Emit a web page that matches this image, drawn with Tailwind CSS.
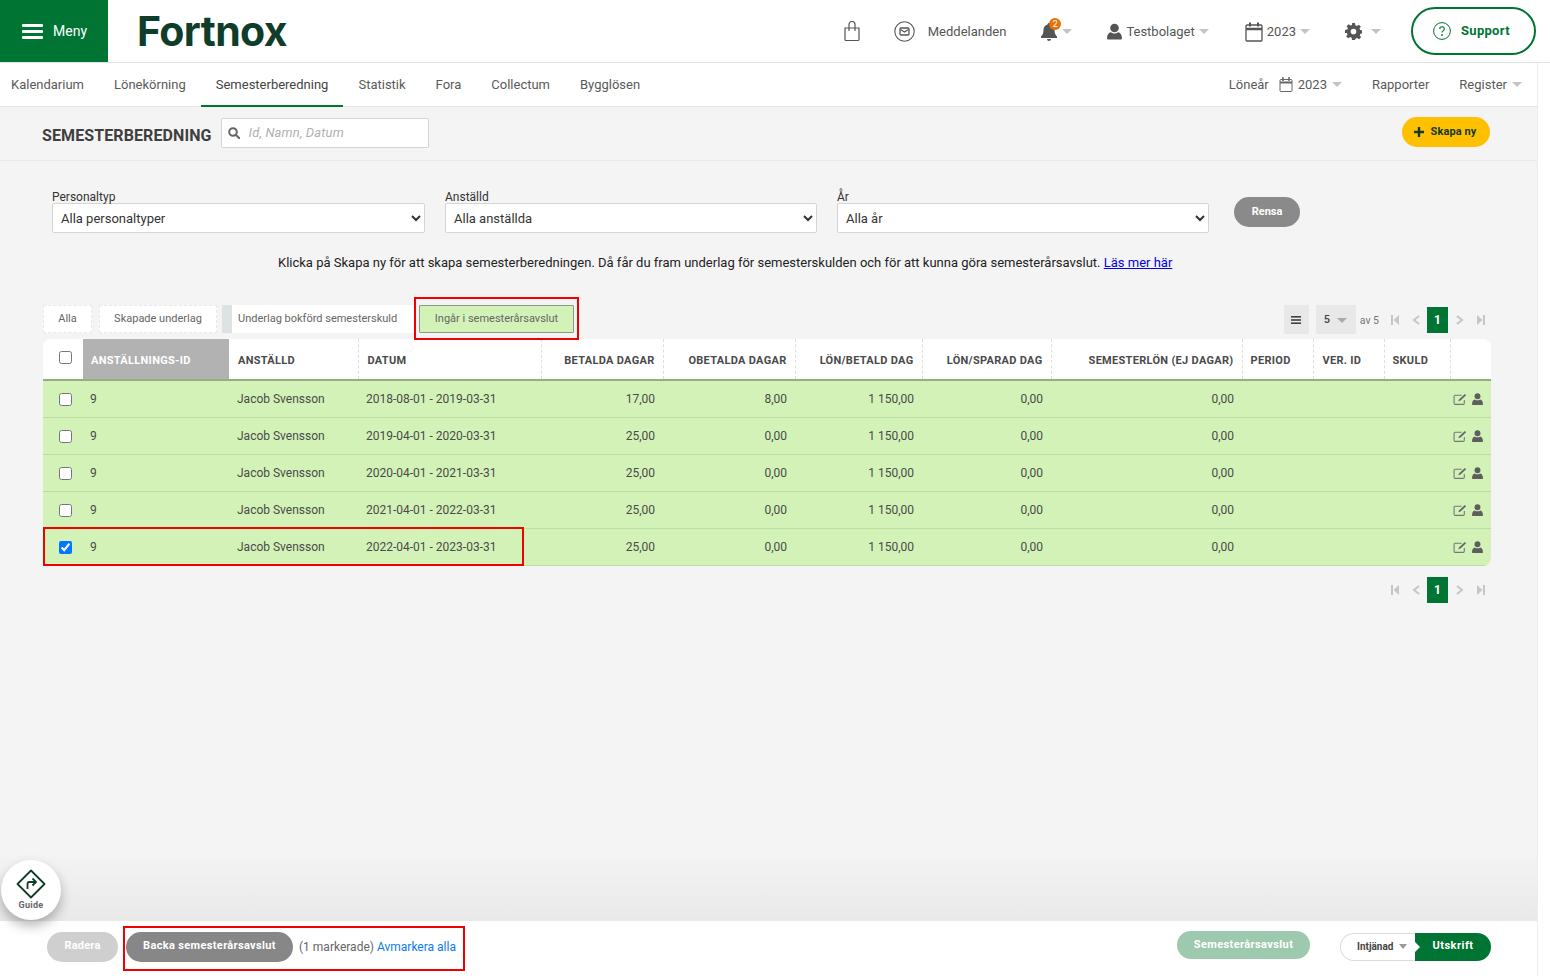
<!DOCTYPE html>
<html lang="sv">
<head>
<meta charset="utf-8">
<title>Semesterberedning</title>
<script src="https://cdn.jsdelivr.net/npm/@tailwindcss/browser@4"></script>
</head>
<body class="font-['Roboto',sans-serif] text-[#4a4a4a] bg-white overflow-hidden">
<div class="relative w-[1550px] h-[976px] flex flex-col overflow-hidden">

<!-- Top header -->
<header class="h-[63px] shrink-0 flex items-center bg-white border-b border-[#dde3e3]">
  <div class="w-[108px] h-[62px] bg-[#007533] flex items-center pl-[22px] gap-[10px] text-white text-[14px]">
    <svg width="21" height="17" viewBox="0 0 21 17" fill="#fff"><rect width="21" height="3" rx="1" y="1"/><rect width="21" height="3" rx="1" y="7"/><rect width="21" height="3" rx="1" y="13"/></svg>
    <span>Meny</span>
  </div>
  <div class="ml-[29px] w-[152px] text-[41px] leading-[40px] font-['Inter',sans-serif] font-bold text-[#0f3d2a] tracking-[-0.6px]">Fortnox</div>
  <div class="ml-auto flex items-center text-[13px] text-[#555] pt-[1px]">
    <svg width="18" height="21" viewBox="0 0 18 21" fill="none" stroke="#555" stroke-width="1.2"><path d="M2 7h14v11.500a1 1 0 0 1-1 1H3a1 1 0 0 1-1-1z"/><path d="M6 10V3.500a3 3 0 0 1 6 0V10"/></svg>
    <svg class="ml-[33px]" width="21" height="21" viewBox="0 0 21 21" fill="none" stroke="#555"><circle cx="10.500" cy="10.500" r="9.700" stroke-width="1.100"/><rect x="6" y="7" width="9" height="7" rx="1" stroke-width="1.300"/><path d="M6.500 8.500 10.500 11l4-2.500" stroke-width="1.100"/></svg>
    <span class="ml-[13px]">Meddelanden</span>
    <span class="relative ml-[34px] flex items-center">
      <svg width="18" height="19" viewBox="0 0 18 19" fill="#555"><path d="M9 1c1 0 1.500.7 1.500 1.500C13 3.200 14.500 5 14.500 8c0 3.500 1 5 2.500 6.500V16H1v-1.500C2.500 13 3.500 11.500 3.500 8c0-3 1.500-4.800 4-5.500C7.500 1.700 8 1 9 1zM7 17h4a2 2 0 0 1-4 0z"/></svg>
      <span class="absolute left-[9px] top-[-4px] w-[12px] h-[12px] rounded-full bg-[#e8710a] text-white text-[9px] leading-[12px] text-center">2</span>
      <span class="ml-[4px] w-0 h-0 border-x-[5px] border-x-transparent border-t-[5px] border-t-[#c4c4c4]"></span>
    </span>
    <svg class="ml-[35px]" width="15" height="17" viewBox="0 0 15 17" fill="#555"><circle cx="7.500" cy="5" r="4.300"/><path d="M1 16.500c-.8 0-1-.5-1-1.200C0 12 1.500 9.500 4 9.200c1 .8 2.200 1.300 3.500 1.300S10 10 11 9.200c2.500.3 4 2.800 4 6.100 0 .7-.2 1.200-1 1.200z"/></svg>
    <span class="ml-[4px]">Testbolaget</span>
    <span class="ml-[4px] w-0 h-0 border-x-[5px] border-x-transparent border-t-[5px] border-t-[#c4c4c4]"></span>
    <svg class="ml-[36px]" width="18" height="20" viewBox="0 0 18 20" fill="none" stroke="#555"><rect x="1" y="3" width="16" height="16" rx="1" stroke-width="1.300"/><path d="M1 7h16" stroke-width="2.500"/><path d="M5 .5v4M13 .5v4" stroke-width="2"/></svg>
    <span class="ml-[4px]">2023</span>
    <span class="ml-[4px] w-0 h-0 border-x-[5px] border-x-transparent border-t-[5px] border-t-[#c4c4c4]"></span>
    <svg class="ml-[35px]" width="17" height="17" viewBox="0 0 24 24" fill="#555"><path fill-rule="evenodd" d="M10 0h4l.7 3.300 2 .8L19.500 2.300l2.800 2.800-1.800 2.800.8 2 3.700.600v4l-3.300.7-.8 2 1.800 2.800-2.800 2.800-2.800-1.800-2 .8L14 24h-4l-.7-3.300-2-.8-2.800 1.800-2.800-2.800 1.800-2.800-.8-2L0 14v-4l3.300-.7.8-2-1.800-2.800 2.800-2.800 2.800 1.800 2-.8zM12 8a4 4 0 1 0 0 8 4 4 0 0 0 0-8z"/></svg>
    <span class="ml-[9px] w-0 h-0 border-x-[5px] border-x-transparent border-t-[5px] border-t-[#c4c4c4]"></span>
  </div>
  <div class="ml-[30px] mr-[14px] w-[125px] h-[48px] rounded-full border-2 border-[#007533] flex items-center pl-[20px] gap-[10px] text-[#007533] text-[13px] font-bold tracking-[0.3px]">
    <svg width="18" height="18" viewBox="0 0 18 18" fill="none" stroke="#007533"><circle cx="9" cy="9" r="8.400" stroke-width="1"/><path d="M6.700 7c0-1.400 1-2.300 2.300-2.300s2.300.9 2.300 2.200c0 1.900-2.300 1.900-2.300 3.700" stroke-width="1.100"/><circle cx="9" cy="13" r=".5" fill="#007533"/></svg>
    <span>Support</span>
  </div>
</header>

<div class="flex-1 flex min-h-0">
  <div class="w-[1537px] flex flex-col min-h-0 bg-[#f4f4f4]">

    <!-- Nav -->
    <nav class="h-[44px] shrink-0 bg-white border-b border-[#e3e6e6] flex items-stretch text-[13px] text-[#5a5a5a] pl-[11px]">
      <a class="flex items-center">Kalendarium</a>
      <a class="flex items-center ml-[30px]">Lönekörning</a>
      <a class="flex items-center ml-[15px] px-[15px] pt-[2px] border-b-2 border-[#007533] text-[#444] h-[44px]">Semesterberedning</a>
      <a class="flex items-center ml-[15px]">Statistik</a>
      <a class="flex items-center ml-[30px]">Fora</a>
      <a class="flex items-center ml-[30px]">Collectum</a>
      <a class="flex items-center ml-[30px]">Bygglösen</a>
      <div class="ml-auto flex items-center pr-[15px]">
        <span>Löneår</span>
        <svg class="ml-[10px]" width="14" height="15" viewBox="0 0 14 15" fill="none" stroke="#666"><rect x="1" y="2.500" width="12" height="12" rx="1"/><path d="M1 5.500h12" stroke-width="2"/><path d="M4 0v4M10 0v4" stroke-width="1.500"/></svg>
        <span class="ml-[5px]">2023</span>
        <span class="ml-[5px] w-0 h-0 border-x-[5px] border-x-transparent border-t-[5px] border-t-[#c4c4c4]"></span>
        <span class="ml-[30px]">Rapporter</span>
        <span class="ml-[30px]">Register</span>
        <span class="ml-[5px] w-0 h-0 border-x-[5px] border-x-transparent border-t-[5px] border-t-[#c4c4c4]"></span>
      </div>
    </nav>

    <!-- Page title row -->
    <div class="h-[54px] shrink-0 border-b border-[#e9e9e9] flex items-center pl-[42px] pr-[47px]">
      <h1 class="text-[16px] font-bold text-[#3f3f3f] tracking-[0.1px] pt-[4px]">SEMESTERBEREDNING</h1>
      <div class="ml-[9px] mt-[-1px] w-[208px] h-[30px] bg-white border border-[#d5d5d5] rounded-[2px] flex items-center pl-[6px] gap-[9px]">
        <svg width="12" height="12" viewBox="0 0 12 12" fill="none" stroke="#666" stroke-width="2"><circle cx="5" cy="5" r="3.800"/><path d="m8 8 3.300 3.300" stroke-linecap="round"/></svg>
        <span class="text-[13px] italic text-[#b0b0b0] tracking-[0.15px]">Id, Namn, Datum</span>
      </div>
      <button class="ml-auto w-[88px] h-[30px] mt-[-3px] rounded-full bg-[#ffc000] flex items-center justify-center gap-[7px] text-[11px] font-bold text-[#123a28] tracking-[0.1px]">
        <svg class="ml-[-2px]" width="10" height="10" viewBox="0 0 10 10" fill="#123a28"><path d="M3.800 0h2.400v3.800H10v2.400H6.200V10H3.800V6.200H0V3.800h3.800z"/></svg>
        <span>Skapa ny</span>
      </button>
    </div>

    <!-- Filters -->
    <div class="shrink-0 pl-[52px] pt-[30px] flex items-start">
      <label class="w-[373px] block text-[12px] leading-[12px] text-[#333]">Personaltyp
        <select class="mt-0 block w-full h-[30px] bg-white border border-[#d5d5d5] rounded-[2px] pl-[4px] text-[13px] text-[#333]"><option>Alla personaltyper</option></select>
      </label>
      <label class="ml-[20px] w-[372px] block text-[12px] leading-[12px] text-[#333]">Anställd
        <select class="mt-0 block w-full h-[30px] bg-white border border-[#d5d5d5] rounded-[2px] pl-[4px] text-[13px] text-[#333]"><option>Alla anställda</option></select>
      </label>
      <label class="ml-[20px] w-[372px] block text-[12px] leading-[12px] text-[#333]">År
        <select class="mt-0 block w-full h-[30px] bg-white border border-[#d5d5d5] rounded-[2px] pl-[4px] text-[13px] text-[#333]"><option>Alla år</option></select>
      </label>
      <button class="ml-[25px] mt-[6px] w-[66px] h-[30px] rounded-full bg-[#8a8a8a] text-white text-[11px] font-bold">Rensa</button>
    </div>

    <p class="shrink-0 mt-[22px] pl-[278px] text-[13px] leading-[15px] text-[#222]">Klicka på Skapa ny för att skapa semesterberedningen. Då får du fram underlag för semesterskulden och för att kunna göra semesterårsavslut. <a class="text-[#0000ee] underline">Läs mer här</a></p>

    <!-- Tabs + pager -->
    <div class="shrink-0 mt-[35px] pl-[43px] pr-[52px] flex items-start h-[29px] text-[11px] text-[#666]">
      <span class="w-[49px] h-[28px] pt-[1px] bg-white border border-dashed border-[#e8e8e8] flex items-center justify-center">Alla</span>
      <span class="ml-[7px] w-[118px] h-[28px] pt-[1px] bg-white border border-dashed border-[#e8e8e8] flex items-center justify-center">Skapade underlag</span>
      <span class="ml-[5px] w-[192px] h-[28px] pt-[1px] bg-white border-l-[10px] border-[#dde3e3] flex items-center pl-[6px]">Underlag bokförd semesterskuld</span>
      <span class="ml-[5px] w-[155px] h-[28px] pt-[1px] bg-[#d3f2b8] border border-[#8a9a85] rounded-[1px] flex items-center justify-center">Ingår i semesterårsavslut</span>
      <div class="ml-auto flex items-center h-[29px]">
        <span class="w-[25px] h-[29px] bg-[#e8e8e8] flex items-center justify-center">
          <svg width="10" height="8" viewBox="0 0 10 8" fill="#444"><rect width="10" height="1.600"/><rect y="3.200" width="10" height="1.600"/><rect y="6.400" width="10" height="1.600"/></svg>
        </span>
        <span class="ml-[7px] w-[40px] h-[29px] bg-[#e8e8e8] flex items-center pl-[8px] pt-[2px] text-[11px] font-medium text-[#444]">5<span class="ml-[7px] w-0 h-0 border-x-[5px] border-x-transparent border-t-[5px] border-t-[#aaa]"></span></span>
        <span class="ml-[4px] mt-[2px] text-[#777] text-[10.500px]">av 5</span>
        <div class="ml-[12px] flex items-center">
          <svg width="8" height="10" viewBox="0 0 8 10" fill="#c6c6c6"><rect width="2" height="10"/><path d="M8 0v10L2.500 5z"/></svg>
          <svg class="ml-[13px]" width="8" height="10" viewBox="0 0 8 10" fill="none" stroke="#c6c6c6" stroke-width="2"><path d="M7 1 2 5l5 4"/></svg>
          <span class="ml-[7px] w-[21px] h-[26px] bg-[#007533] text-white text-[12px] font-bold flex items-center justify-center">1</span>
          <svg class="ml-[8px]" width="8" height="10" viewBox="0 0 8 10" fill="none" stroke="#c6c6c6" stroke-width="2"><path d="m1 1 5 4-5 4"/></svg>
          <svg class="ml-[13px]" width="8" height="10" viewBox="0 0 8 10" fill="#c6c6c6"><rect x="6" width="2" height="10"/><path d="M0 0v10l5.500-5z"/></svg>
        </div>
      </div>
    </div>

    <!-- Table -->
    <div class="shrink-0 ml-[43px] mt-[5px] w-[1448px] rounded-[8px] overflow-hidden">
      <table class="w-[1448px] table-fixed border-collapse text-[12px]">
        <colgroup>
          <col class="w-[40px]"><col class="w-[146px]"><col class="w-[129px]"><col class="w-[183px]"><col class="w-[122px]"><col class="w-[132px]"><col class="w-[127px]"><col class="w-[129px]"><col class="w-[191px]"><col class="w-[71px]"><col class="w-[71px]"><col class="w-[66px]"><col class="w-[41px]">
        </colgroup>
        <thead>
          <tr class="h-[41px] bg-white border-b-[2px] border-[#95ad80] text-[11px] font-bold text-[#4a4a4a] tracking-[0.3px]">
            <th class="p-0 pl-[5px] text-center font-normal"><input type="checkbox" class="w-[13px] h-[13px] mt-[-2px] align-middle"></th>
            <th class="px-[8px] pt-[5px] text-left bg-[#b2b2b2] text-white font-bold">ANSTÄLLNINGS-ID</th>
            <th class="pl-[9px] pr-[8px] pt-[5px] text-left border-r border-dashed border-[#ddd]">ANSTÄLLD</th>
            <th class="pl-[9px] pr-[8px] pt-[5px] text-left border-r border-dashed border-[#ddd]">DATUM</th>
            <th class="px-[8px] pt-[5px] text-right border-r border-dashed border-[#ddd]">BETALDA DAGAR</th>
            <th class="px-[8px] pt-[5px] text-right border-r border-dashed border-[#ddd]">OBETALDA DAGAR</th>
            <th class="px-[8px] pt-[5px] text-right border-r border-dashed border-[#ddd]">LÖN/BETALD DAG</th>
            <th class="px-[8px] pt-[5px] text-right border-r border-dashed border-[#ddd]">LÖN/SPARAD DAG</th>
            <th class="px-[8px] pt-[5px] text-right border-r border-dashed border-[#ddd]">SEMESTERLÖN (EJ DAGAR)</th>
            <th class="px-[8px] pt-[5px] text-left border-r border-dashed border-[#ddd]">PERIOD</th>
            <th class="pl-[9px] pr-[8px] pt-[5px] text-left border-r border-dashed border-[#ddd]">VER. ID</th>
            <th class="px-[8px] pt-[5px] text-left border-r border-dashed border-[#ddd]">SKULD</th>
            <th></th>
          </tr>
        </thead>
        <tbody class="bg-[#d3f2b8] text-[#4a4a4a]">
          <tr class="h-[37px] border-b border-[#bcdca2]">
            <td class="p-0 pl-[5px] text-center"><input type="checkbox" class="w-[13px] h-[13px] align-middle"></td><td class="pl-[7px] pr-[8px]">9</td><td class="px-[8px]">Jacob Svensson</td><td class="px-[8px]">2018-08-01 - 2019-03-31</td><td class="px-[8px] text-right">17,00</td><td class="px-[8px] text-right">8,00</td><td class="px-[8px] text-right">1 150,00</td><td class="px-[8px] text-right">0,00</td><td class="px-[8px] text-right">0,00</td><td></td><td></td><td></td>
            <td class="pl-[3px]"><span class="flex items-center gap-[5px]"><svg width="14" height="12" viewBox="0 0 13 11" fill="none" stroke="#777"><path d="M8 2H2a1 1 0 0 0-1 1v6.500a1 1 0 0 0 1 1h7.500a1 1 0 0 0 1-1V6.500"/><path d="M5 7.500 5.500 6 11 .8l1.200 1.200L7 7z" fill="#666" stroke="none"/></svg><svg width="11" height="12" viewBox="0 0 10 11" fill="#5e5e5e"><circle cx="5" cy="3" r="2.700"/><path d="M.7 11C.2 11 0 10.600 0 10c0-2 .9-3.800 2.500-4.100.7.500 1.500.8 2.500.8s1.800-.3 2.500-.8C9.100 6.200 10 8 10 10c0 .6-.2 1-.7 1z"/></svg></span></td>
          </tr>
          <tr class="h-[37px] border-b border-[#bcdca2]">
            <td class="p-0 pl-[5px] text-center"><input type="checkbox" class="w-[13px] h-[13px] align-middle"></td><td class="pl-[7px] pr-[8px]">9</td><td class="px-[8px]">Jacob Svensson</td><td class="px-[8px]">2019-04-01 - 2020-03-31</td><td class="px-[8px] text-right">25,00</td><td class="px-[8px] text-right">0,00</td><td class="px-[8px] text-right">1 150,00</td><td class="px-[8px] text-right">0,00</td><td class="px-[8px] text-right">0,00</td><td></td><td></td><td></td>
            <td class="pl-[3px]"><span class="flex items-center gap-[5px]"><svg width="14" height="12" viewBox="0 0 13 11" fill="none" stroke="#777"><path d="M8 2H2a1 1 0 0 0-1 1v6.500a1 1 0 0 0 1 1h7.500a1 1 0 0 0 1-1V6.500"/><path d="M5 7.500 5.500 6 11 .8l1.200 1.200L7 7z" fill="#666" stroke="none"/></svg><svg width="11" height="12" viewBox="0 0 10 11" fill="#5e5e5e"><circle cx="5" cy="3" r="2.700"/><path d="M.7 11C.2 11 0 10.600 0 10c0-2 .9-3.800 2.500-4.100.7.500 1.500.8 2.500.8s1.800-.3 2.500-.8C9.100 6.200 10 8 10 10c0 .6-.2 1-.7 1z"/></svg></span></td>
          </tr>
          <tr class="h-[37px] border-b border-[#bcdca2]">
            <td class="p-0 pl-[5px] text-center"><input type="checkbox" class="w-[13px] h-[13px] align-middle"></td><td class="pl-[7px] pr-[8px]">9</td><td class="px-[8px]">Jacob Svensson</td><td class="px-[8px]">2020-04-01 - 2021-03-31</td><td class="px-[8px] text-right">25,00</td><td class="px-[8px] text-right">0,00</td><td class="px-[8px] text-right">1 150,00</td><td class="px-[8px] text-right">0,00</td><td class="px-[8px] text-right">0,00</td><td></td><td></td><td></td>
            <td class="pl-[3px]"><span class="flex items-center gap-[5px]"><svg width="14" height="12" viewBox="0 0 13 11" fill="none" stroke="#777"><path d="M8 2H2a1 1 0 0 0-1 1v6.500a1 1 0 0 0 1 1h7.500a1 1 0 0 0 1-1V6.500"/><path d="M5 7.500 5.500 6 11 .8l1.200 1.200L7 7z" fill="#666" stroke="none"/></svg><svg width="11" height="12" viewBox="0 0 10 11" fill="#5e5e5e"><circle cx="5" cy="3" r="2.700"/><path d="M.7 11C.2 11 0 10.600 0 10c0-2 .9-3.800 2.500-4.100.7.500 1.500.8 2.500.8s1.800-.3 2.500-.8C9.100 6.200 10 8 10 10c0 .6-.2 1-.7 1z"/></svg></span></td>
          </tr>
          <tr class="h-[37px] border-b border-[#bcdca2]">
            <td class="p-0 pl-[5px] text-center"><input type="checkbox" class="w-[13px] h-[13px] align-middle"></td><td class="pl-[7px] pr-[8px]">9</td><td class="px-[8px]">Jacob Svensson</td><td class="px-[8px]">2021-04-01 - 2022-03-31</td><td class="px-[8px] text-right">25,00</td><td class="px-[8px] text-right">0,00</td><td class="px-[8px] text-right">1 150,00</td><td class="px-[8px] text-right">0,00</td><td class="px-[8px] text-right">0,00</td><td></td><td></td><td></td>
            <td class="pl-[3px]"><span class="flex items-center gap-[5px]"><svg width="14" height="12" viewBox="0 0 13 11" fill="none" stroke="#777"><path d="M8 2H2a1 1 0 0 0-1 1v6.500a1 1 0 0 0 1 1h7.500a1 1 0 0 0 1-1V6.500"/><path d="M5 7.500 5.500 6 11 .8l1.200 1.200L7 7z" fill="#666" stroke="none"/></svg><svg width="11" height="12" viewBox="0 0 10 11" fill="#5e5e5e"><circle cx="5" cy="3" r="2.700"/><path d="M.7 11C.2 11 0 10.600 0 10c0-2 .9-3.800 2.500-4.100.7.500 1.500.8 2.500.8s1.800-.3 2.500-.8C9.100 6.200 10 8 10 10c0 .6-.2 1-.7 1z"/></svg></span></td>
          </tr>
          <tr class="h-[37px] border-b border-[#bcdca2]">
            <td class="p-0 pl-[5px] text-center"><input type="checkbox" checked class="w-[13px] h-[13px] align-middle"></td><td class="pl-[7px] pr-[8px]">9</td><td class="px-[8px]">Jacob Svensson</td><td class="px-[8px]">2022-04-01 - 2023-03-31</td><td class="px-[8px] text-right">25,00</td><td class="px-[8px] text-right">0,00</td><td class="px-[8px] text-right">1 150,00</td><td class="px-[8px] text-right">0,00</td><td class="px-[8px] text-right">0,00</td><td></td><td></td><td></td>
            <td class="pl-[3px]"><span class="flex items-center gap-[5px]"><svg width="14" height="12" viewBox="0 0 13 11" fill="none" stroke="#777"><path d="M8 2H2a1 1 0 0 0-1 1v6.500a1 1 0 0 0 1 1h7.500a1 1 0 0 0 1-1V6.500"/><path d="M5 7.500 5.500 6 11 .8l1.200 1.200L7 7z" fill="#666" stroke="none"/></svg><svg width="11" height="12" viewBox="0 0 10 11" fill="#5e5e5e"><circle cx="5" cy="3" r="2.700"/><path d="M.7 11C.2 11 0 10.600 0 10c0-2 .9-3.800 2.500-4.100.7.500 1.500.8 2.500.8s1.800-.3 2.500-.8C9.100 6.200 10 8 10 10c0 .6-.2 1-.7 1z"/></svg></span></td>
          </tr>
        </tbody>
      </table>
    </div>

    <!-- Lower pager -->
    <div class="shrink-0 mt-[11px] pr-[52px] h-[26px] flex items-center justify-end">
      <svg width="8" height="10" viewBox="0 0 8 10" fill="#c6c6c6"><rect width="2" height="10"/><path d="M8 0v10L2.500 5z"/></svg>
      <svg class="ml-[13px]" width="8" height="10" viewBox="0 0 8 10" fill="none" stroke="#c6c6c6" stroke-width="2"><path d="M7 1 2 5l5 4"/></svg>
      <span class="ml-[7px] w-[21px] h-[26px] bg-[#007533] text-white text-[12px] font-bold flex items-center justify-center">1</span>
      <svg class="ml-[8px]" width="8" height="10" viewBox="0 0 8 10" fill="none" stroke="#c6c6c6" stroke-width="2"><path d="m1 1 5 4-5 4"/></svg>
      <svg class="ml-[13px]" width="8" height="10" viewBox="0 0 8 10" fill="#c6c6c6"><rect x="6" width="2" height="10"/><path d="M0 0v10l5.500-5z"/></svg>
    </div>

    <!-- Spacer with fade to footer -->
    <div class="flex-1 flex flex-col justify-end">
      <div class="h-[70px] bg-gradient-to-b from-[#f4f4f4] to-[#e9e9e9]"></div>
    </div>

    <!-- Footer bar -->
    <footer class="h-[55px] shrink-0 bg-white flex items-center pb-[4px] pl-[47px] pr-[46px] text-[12px] text-[#666]">
      <button class="w-[71px] h-[30px] rounded-full bg-[#cfcfcf] text-white text-[11px] font-bold tracking-[0.2px]">Radera</button>
      <div class="ml-[5px] mt-[4px] w-[342px] h-[45px] border-2 border-[#f00000] flex items-center pl-[1px] pb-[4px]">
        <button class="w-[167px] h-[30px] rounded-full bg-[#878787] text-white text-[11px] font-bold tracking-[0.35px]">Backa semesterårsavslut</button>
        <span class="ml-[6px]">(1 markerade) <a class="text-[#0a7cf0]">Avmarkera alla</a></span>
      </div>
      <button class="ml-auto mt-[-3px] w-[133px] h-[28px] rounded-full bg-[#9dc9af] text-white text-[11px] font-bold tracking-[0.4px]">Semesterårsavslut</button>
      <div class="ml-[30px] flex items-center h-[28px]">
        <span class="relative w-[75px] h-[28px] rounded-l-full border border-r-0 border-[#dcdcdc] bg-white flex items-center pl-[16px] text-[10px] font-bold text-[#444]">Intjänad<span class="ml-[6px] w-0 h-0 border-x-[4.500px] border-x-transparent border-t-[5px] border-t-[#999]"></span><span class="absolute right-[-5px] top-[8px] w-0 h-0 border-y-[5px] border-y-transparent border-l-[5px] border-l-white z-10"></span></span>
        <button class="w-[76px] h-[28px] rounded-r-full bg-[#007533] text-white text-[11px] font-bold tracking-[0.5px]">Utskrift</button>
      </div>
    </footer>
  </div>
  <div class="w-[13px] bg-white border-l border-[#eceeee]"></div>
</div>

<!-- Overlays -->
<div class="absolute left-[414px] top-[297px] w-[165px] h-[43px] border-2 border-[#f00000] pointer-events-none"></div>
<div class="absolute left-[43px] top-[527px] w-[481px] h-[39px] border-2 border-[#f00000] pointer-events-none"></div>
<div class="absolute left-[1px] top-[860px] w-[60px] h-[60px] rounded-full bg-white shadow-[0_6px_12px_rgba(0,0,0,0.28)] flex flex-col items-center pt-[9px]">
  <svg width="30" height="30" viewBox="0 0 30 30" fill="none" stroke="#0f3d2a" stroke-width="1.800"><path d="M15 1.500 28.500 15 15 28.500 1.500 15z" stroke-linejoin="round"/><path d="M11.500 20v-5a2 2 0 0 1 2-2h6"/><path d="m16.500 9.500 3.500 3.500-3.500 3.500"/></svg>
  <span class="text-[9px] font-bold text-[#666] tracking-[0.3px] leading-[10px] mt-[1px]">Guide</span>
</div>
</div>
</body>
</html>
